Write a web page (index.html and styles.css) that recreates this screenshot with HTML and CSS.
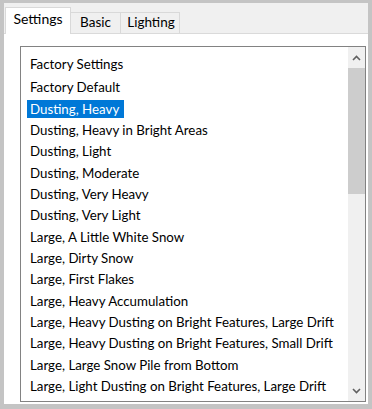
FILE: index.html
```html
<!DOCTYPE html>
<html>
<head>
<meta charset="utf-8">
<link rel="stylesheet" href="styles.css">
</head>
<body>
<div class="window">
  <div class="tabs">
    <div class="tab active">Settings</div>
    <div class="tab basic">Basic</div>
    <div class="tab lighting">Lighting</div>
  </div>
  <div class="panel">
    <div class="listbox">
      <div class="list">
        <div class="group"><span>Factory Settings</span></div>
        <div class="item"><span>Factory Default</span></div>
        <div class="item selected"><span>Dusting, Heavy</span></div>
        <div class="item"><span>Dusting, Heavy in Bright Areas</span></div>
        <div class="item"><span>Dusting, Light</span></div>
        <div class="item"><span>Dusting, Moderate</span></div>
        <div class="item"><span>Dusting, Very Heavy</span></div>
        <div class="item"><span>Dusting, Very Light</span></div>
        <div class="item"><span>Large, A Little White Snow</span></div>
        <div class="item"><span>Large, Dirty Snow</span></div>
        <div class="item"><span>Large, First Flakes</span></div>
        <div class="item"><span>Large, Heavy Accumulation</span></div>
        <div class="item"><span>Large, Heavy Dusting on Bright Features, Large Drift</span></div>
        <div class="item"><span>Large, Heavy Dusting on Bright Features, Small Drift</span></div>
        <div class="item"><span>Large, Large Snow Pile from Bottom</span></div>
        <div class="item"><span>Large, Light Dusting on Bright Features, Large Drift</span></div>
      </div>
      <div class="scrollbar">
        <div class="sb-btn">
          <svg width="9" height="6" viewBox="0 0 9 6"><path d="M1 5 L4.5 1.5 L8 5" fill="none" stroke="#606060" stroke-width="1.6"/></svg>
        </div>
        <div class="thumb"></div>
        <div class="track"></div>
        <div class="sb-btn">
          <svg width="9" height="6" viewBox="0 0 9 6"><path d="M1 1 L4.5 4.5 L8 1" fill="none" stroke="#606060" stroke-width="1.6"/></svg>
        </div>
      </div>
    </div>
  </div>
</div>
</body>
</html>
```
FILE: styles.css
```css
html, body {
  margin: 0;
  padding: 0;
}
body {
  width: 372px;
  height: 409px;
  overflow: hidden;
  background: #c4c4c4;
  font-family: Lato, "Noto Sans", sans-serif;
  font-size: 13.3px;
  color: #000;
}
.window {
  margin: 3px 4px 0 4px;
  height: 401px;
  display: flex;
  flex-direction: column;
  background: #f0f0f0;
}
.tabs {
  height: 31px;
  flex: none;
  display: flex;
  align-items: flex-end;
  padding-left: 1px;
  box-sizing: border-box;
  border-bottom: 1px solid #dadada;
}
.tab {
  height: 21px;
  box-sizing: border-box;
  border: 1px solid #d9d9d9;
  border-bottom: none;
  border-left: none;
  display: flex;
  align-items: center;
  justify-content: center;
  background: #f0f0f0;
  line-height: 1;
  font-size: 13.5px;
}
.tab.active {
  width: 66px;
  height: 27px;
  margin-bottom: -1px;
  background: #fff;
  border-left: 1px solid #d9d9d9;
  padding-bottom: 4px;
  font-size: 14px;
}
.tab.basic { width: 50px; }
.tab.lighting { width: 59px; padding-left: 2px; }
.panel {
  flex: 1;
  background: #fff;
  padding: 12px 0 0 16px;
}
.listbox {
  width: 346px;
  height: 356px;
  box-sizing: border-box;
  border: 1px solid #828282;
  display: flex;
  overflow: hidden;
}
.list {
  flex: 1;
  padding-top: 5px;
  overflow: hidden;
}
.group {
  height: 25px;
  line-height: 25px;
  padding-left: 6px;
}
.item {
  height: 21.36px;
  display: flex;
  align-items: center;
  padding-left: 6px;
  white-space: nowrap;
}
.group span, .item span {
  padding: 0 3px;
}
.item span {
  line-height: 17px;
}
.item.selected span {
  background: #0078d7;
  color: #fff;
  padding-right: 5px;
  line-height: 18px;
}
.scrollbar {
  width: 17px;
  background: #f0f0f0;
  display: flex;
  flex-direction: column;
}
.sb-btn {
  height: 21px;
  display: flex;
  align-items: center;
  justify-content: center;
}
.thumb {
  height: 126px;
  background: #cdcdcd;
}
.track {
  flex: 1;
}
```
